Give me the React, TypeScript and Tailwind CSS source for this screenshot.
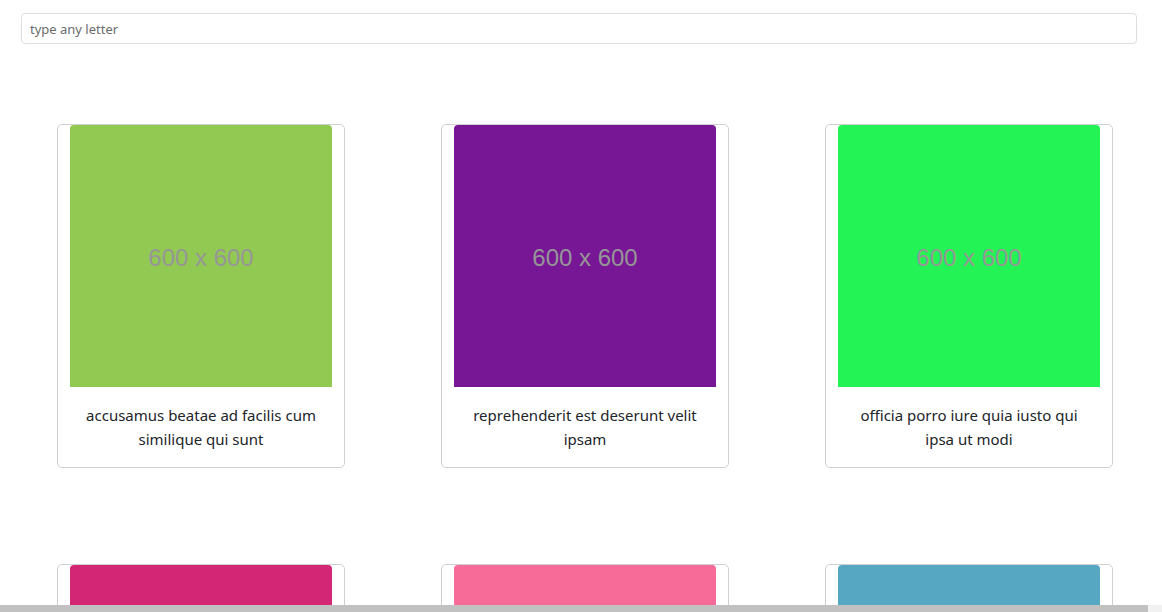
const photos = [
  { title: 'accusamus beatae ad facilis cum similique qui sunt', color: 'bg-[#92c952]' },
  { title: 'reprehenderit est deserunt velit ipsam', color: 'bg-[#771796]' },
  { title: 'officia porro iure quia iusto qui ipsa ut modi', color: 'bg-[#24f355]' },
  { title: 'culpa odio esse rerum omnis laboriosam voluptate repudiandae', color: 'bg-[#d32776]' },
  { title: 'natus nisi omnis corporis facere molestiae rerum in', color: 'bg-[#f66b97]' },
  { title: 'accusamus ea aliquid et amet sequi nemo', color: 'bg-[#56a8c2]' },
];

const App: React.FC = () => {
  return (
    <div className="relative h-screen overflow-hidden bg-white font-['Noto_Sans',sans-serif] text-[#212529]">
      <div className="px-[21px] pt-[13px]">
        <input
          type="text"
          placeholder="type any letter"
          className="block h-[31px] w-[1116px] rounded-[4px] border border-[#dedede] px-[8px] text-[13px] placeholder:text-[#6c6c6c] outline-none"
        />
      </div>

      <div className="grid grid-cols-[288px_288px_288px] gap-x-[96px] gap-y-[96px] pl-[57px] pt-[80px]">
        {photos.map((photo, index) => (
          <div key={index} className="rounded-[5px] border border-[#d0d0d0] px-[12px]">
            <div
              className={`flex h-[262px] w-[262px] items-center justify-center rounded-t-[4px] pt-[4px] ${photo.color}`}
            >
              <span className="font-['Liberation_Sans',Arial,sans-serif] text-[24px] text-[#969696]">
                600 x 600
              </span>
            </div>
            <p className="px-[12px] pt-[16px] pb-[16px] text-center text-[15px] leading-[24px]">
              {photo.title}
            </p>
          </div>
        ))}
      </div>

      {/* horizontal scrollbar */}
      <div className="absolute bottom-0 left-0 flex h-[7px] w-full">
        <div className="h-full w-[1148px] bg-[#c1c1c1]" />
        <div className="h-full flex-1 bg-[#f1f1f1]" />
      </div>
    </div>
  );
};

export default App;
